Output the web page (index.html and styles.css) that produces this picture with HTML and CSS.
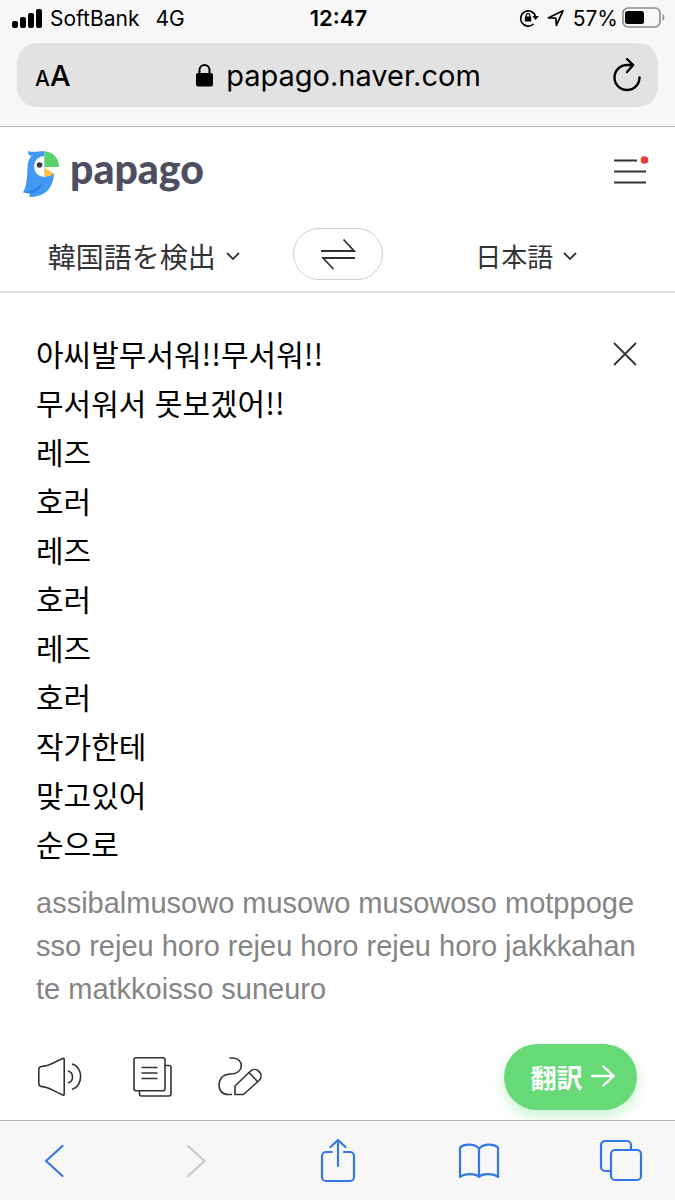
FILE: index.html
```html
<!DOCTYPE html>
<html lang="ja">
    <head>
        <meta charset="UTF-8" />
        <meta name="viewport" content="width=device-width, initial-scale=1.0" />
        <title>Papago</title>
        <link rel="stylesheet" href="styles.css">
    </head>
    <body>
        <div class="browser-top">
            <div class="status">
                <div class="status-left">
                    <svg width="30" height="20" viewBox="0 0 30 20"><rect x="0" y="13" width="6" height="7" rx="2" /><rect x="8" y="9" width="6" height="11" rx="2" /><rect x="16" y="5" width="6" height="15" rx="2" /><rect x="24" y="1" width="6" height="19" rx="2" /></svg>
                    <span>SoftBank</span>
                    <span class="network">4G</span>
                </div>
                <time>12:47</time>
                <div class="status-right">
                    <svg width="20" height="20" viewBox="0 0 20 20"><path d="M14.500 16A7.600 7.600 0 1 1 16.600 8.500" fill="none" stroke="#000" stroke-width="1.7" /><path d="M13.400 8h6.400l-3.200 4z" /><rect x="5.800" y="8.600" width="6.400" height="5" rx=".6" /><path d="M7.200 9V7.400a1.800 1.800 0 0 1 3.600 0V9" fill="none" stroke="#000" stroke-width="1.2" /></svg>
                    <svg width="18" height="18" viewBox="0 0 18 18"><path d="M1.500 8.800 16 1.800 9.400 16.400 8.800 9.200z" fill="none" stroke="#000" stroke-width="1.7" stroke-linejoin="round" /></svg>
                    <span>57%</span>
                    <svg class="battery" width="43" height="22" viewBox="0 0 43 22"><rect x="1" y="1" width="37" height="19" rx="5" fill="none" stroke="#8c8c8c" stroke-width="1.6" /><rect x="3" y="4" width="19" height="13" rx="2.5" /><path d="M40.500 7v7c2.600-1 2.600-6 0-7z" fill="#999" /></svg>
                </div>
            </div>
            <div class="address">
                <button class="text-size" aria-label="Text size"><small>A</small>A</button>
                <button class="url">
                    <svg width="18" height="24" viewBox="0 0 18 24"><rect x="0" y="10" width="17" height="13.500" rx="2" /><path d="M3.500 11V7a5 5 0 0 1 10 0v4" fill="none" stroke="#000" stroke-width="2" /></svg>
                    papago.naver.com
                </button>
                <button class="reload" aria-label="Reload">
                    <svg width="30" height="34" viewBox="0 0 30 34"><path d="M27.500 19.500A12.500 12.500 0 1 1 15 7h6M15 1l6.200 6-6.200 7" fill="none" stroke="#000" stroke-width="2.400" stroke-linecap="round" stroke-linejoin="round" /></svg>
                </button>
            </div>
        </div>

        <header>
            <a class="logo" href="#">
                <svg width="38" height="48" viewBox="0 0 38 48">
                    <path d="M5 1c3 1 7 1 10 .6L21.500 1v14L31 22c0 15-8 25-24.500 25l.5-4L0 42.500C4 35 4 29 4.500 17 4.700 12 6 9 8.500 6 6 5.500 5 4 5 1z" fill="#4298f5" />
                    <path d="M0 42.500C9 42 15 38 19 33c-1 6-6 10-12.500 10.500z" fill="#2f80e4" />
                    <path d="M21.500 6a10.500 10.500 0 0 0 0 21z" fill="#fff" />
                    <path d="M21.500 1.500C30 1.500 36 8 36 17H21.500z" fill="#5ad16b" />
                    <path d="M21.500 17H31v6l-9.500 4z" fill="#fff" />
                    <path d="M21.500 17.500 31 24q-5 3-9.500 3z" fill="#fdc23e" />
                    <circle cx="16.500" cy="15" r="2.800" fill="#383844" />
                </svg>
                <span>papago</span>
            </a>
            <button class="menu" aria-label="Menu">
                <svg width="36" height="30" viewBox="0 0 36 30"><path d="M1 6.500h23M1 17.500h32M1 28.500h32" stroke="#333" stroke-width="1.800" /><circle cx="31.500" cy="6" r="3.800" fill="#f23a34" /></svg>
            </button>
        </header>

        <nav class="languages">
            <label class="lang source">
                <select aria-label="翻訳元の言語">
                    <option>韓国語を検出</option>
                    <option>英語</option>
                </select>
                <svg width="24" height="24" viewBox="0 0 24 24"><path d="m6 9 6 6 6-6" /></svg>
            </label>
            <button class="swap" aria-label="言語を入れ替える">
                <svg width="36" height="32" viewBox="0 0 36 32"><path d="M1 13h33L23.500 1.500M35 20H3l10.500 11" /></svg>
            </button>
            <label class="lang target">
                <select aria-label="翻訳先の言語">
                    <option>日本語</option>
                    <option>英語</option>
                </select>
                <svg width="24" height="24" viewBox="0 0 24 24"><path d="m6 9 6 6 6-6" /></svg>
            </label>
        </nav>

        <main>
            <div class="input">
                <textarea lang="ko" rows="11" aria-label="翻訳するテキスト" spellcheck="false">아씨발무서워!!무서워!!
무서워서 못보겠어!!
레즈
호러
레즈
호러
레즈
호러
작가한테
맞고있어
순으로</textarea>
                <button class="clear" aria-label="消去">
                    <svg width="24" height="24" viewBox="0 0 24 24"><path d="m1 1 22 22M23 1 1 23" stroke="#333" stroke-width="1.800" /></svg>
                </button>
            </div>
            <p class="romanized">assibalmusowo musowo musowoso motppogesso rejeu horo rejeu horo rejeu horo jakkkahante matkkoisso suneuro</p>
            <div class="tools">
                <button aria-label="音声">
                    <svg width="44" height="40" viewBox="0 0 44 40"><path d="M.8 12.500c0-2 1-3 3-3 6 0 7-1.500 21-8 .8-.3 1.400 0 1.400.8v35c0 .8-.6 1.100-1.400.8-14-6.500-15-8.500-21-8.500-2 0-3-1-3-3zM30 14c6 1.500 6 10.500 0 12M34 7c11.500 3 11.500 22 0 25.500" /></svg>
                </button>
                <button aria-label="コピー">
                    <svg width="44" height="40" viewBox="-2 0 44 40"><rect x="4" y=".8" width="31" height="33" rx="2" /><path d="M11.500 10.500h16M11.500 16h16M11.500 21.500h16M35 8.500h4a2 2 0 0 1 2 2V37a2 2 0 0 1-2 2H11.500a2 2 0 0 1-2-2v-3" /></svg>
                </button>
                <button aria-label="手書き">
                    <svg width="44" height="40" viewBox="0 0 44 40"><path d="M11.500 1h3C26.500 1 26.500 17 13 17 3 17 1 24 1 28c0 5 3 9.500 9 9.500h4M17 37.500V29L32 14.500c6-6 15 2.500 9 9l-15.500 14zM31 15.500l8.500 9" /></svg>
                </button>
                <button class="translate">
                    翻訳
                    <svg width="24" height="22" viewBox="0 0 24 22"><path d="M1 11h21M12.500 1.500 22.500 11l-10 9.500" /></svg>
                </button>
            </div>
        </main>

        <footer class="toolbar">
            <button aria-label="Back"><svg width="44" height="44" viewBox="0 0 44 44"><path d="M30.500 7 14 22l16.500 15" stroke-width="3" /></svg></button>
            <button aria-label="Forward" disabled><svg width="44" height="44" viewBox="0 0 44 44"><path d="m14 7 16.500 15L14 37" stroke-width="3" /></svg></button>
            <button aria-label="Share"><svg width="44" height="44" viewBox="0 0 44 44"><path d="M16 13h-6a4 4 0 0 0-4 4v21a4 4 0 0 0 4 4h24a4 4 0 0 0 4-4V17a4 4 0 0 0-4-4h-6M22 27V1M14.500 8 22 1l7.500 7" /></svg></button>
            <button aria-label="Bookmarks"><svg width="44" height="44" viewBox="0 0 44 44"><path d="M22 10c-3-5-14-6-19-1.500V38c5-4 16-3.500 19 0 3-3.500 14-4 19 0V8.500C36 4 25 5 22 10zm0 0v28" /></svg></button>
            <button aria-label="Tabs"><svg width="44" height="44" viewBox="0 0 44 44"><rect x="12" y="11" width="30" height="30" rx="4" /><path d="M12 32H6a4 4 0 0 1-4-4V6a4 4 0 0 1 4-4h22a4 4 0 0 1 4 4v5" /></svg></button>
        </footer>
    </body>
</html>
```
FILE: styles.css
```css
* {
    box-sizing: border-box;
}

body {
    display: flex;
    flex-direction: column;
    min-height: 100vh;
    margin: 0;
    background: #fff;
    color: #000;
    font-family: Inter, "Noto Sans CJK JP", sans-serif;
}

button,
select,
textarea {
    margin: 0;
    padding: 0;
    border: 0;
    background: none;
    color: inherit;
    font: inherit;
}

button {
    cursor: pointer;
}

svg {
    display: block;
    flex: none;
}

/* Browser chrome */
.browser-top {
    padding-bottom: 19px;
    border-bottom: 1px solid #b2b2b2;
    background: #f7f7f7;
}

.status {
    display: grid;
    grid-template-columns: 1fr auto 1fr;
    align-items: center;
    height: 36px;
    padding: 0 10px 0 12px;
    font-size: 21px;
}

.status time {
    font-size: 22px;
    font-weight: 600;
}

.status-left,
.status-right {
    display: flex;
    align-items: center;
    gap: 8px;
}

.status-right {
    justify-content: flex-end;
}

.network {
    margin-left: 8px;
}

.battery {
    margin-left: -4px;
}

.address {
    display: grid;
    grid-template-columns: 1fr auto 1fr;
    align-items: center;
    height: 64px;
    margin: 7px 17px 0;
    padding: 0 16px 0 18px;
    border-radius: 20px;
    background: #e2e2e2;
    font-size: 29px;
}

.text-size {
    justify-self: start;
    font-weight: 500;
}

.text-size small {
    font-size: 21px;
}

.url {
    display: flex;
    align-items: center;
    gap: 12px;
}

.reload {
    justify-self: end;
}

/* Papago header */
header {
    display: flex;
    align-items: center;
    justify-content: space-between;
    height: 96px;
    padding: 0 26px 2px 23px;
}

.logo {
    display: flex;
    align-items: center;
    gap: 9px;
    color: #4f4e60;
    font-family: Lato, sans-serif;
    font-size: 41px;
    font-weight: 900;
    line-height: 48px;
    text-decoration: none;
}

.logo span {
    padding-bottom: 10px;
}

.menu {
    padding-bottom: 10px;
}

.languages {
    display: grid;
    grid-template-columns: 1fr 90px 1fr;
    align-items: center;
    padding: 5px 0 11px;
    border-bottom: 2px solid #e2e2e2;
    color: #333;
    font-family: "Noto Sans CJK JP", sans-serif;
}

.languages path {
    fill: none;
    stroke: #333;
    stroke-width: 1.8;
}

.lang {
    display: flex;
    align-items: center;
    justify-content: center;
    gap: 4px;
    padding-top: 4px;
}

.lang select {
    appearance: none;
    font-size: 28px;
    line-height: 40px;
}

.lang.target select {
    font-size: 26px;
}

.swap {
    display: flex;
    align-items: center;
    justify-content: center;
    height: 52px;
    border: 1px solid #d0d0d0;
    border-radius: 26px;
}

/* Source text */
main {
    flex: 1;
    padding: 36px 38px 10px 36px;
}

.input {
    display: flex;
    align-items: flex-start;
    justify-content: space-between;
}

.input textarea {
    flex: 1;
    height: 539px;
    overflow: hidden;
    outline: 0;
    resize: none;
    font-family: "Noto Sans CJK KR", sans-serif;
    font-size: 30px;
    line-height: 49px;
}

.clear {
    padding: 13px 0;
}

.romanized {
    margin: 14px 0 33px;
    color: #858585;
    font-family: "Liberation Sans", Arial, sans-serif;
    font-size: 29px;
    line-height: 43px;
    word-break: break-all;
}

.tools {
    display: flex;
    align-items: center;
    gap: 46px;
    padding-left: 2px;
}

.tools path,
.tools rect {
    fill: none;
    stroke: #333;
    stroke-width: 1.6;
}

.tools .translate {
    display: flex;
    align-items: center;
    justify-content: center;
    gap: 8px;
    width: 133px;
    height: 66px;
    margin-left: auto;
    padding: 0 0 2px 4px;
    border-radius: 33px;
    background: #67d977;
    box-shadow: 0 6px 14px #67d97759;
    color: #fff;
    font-family: "Noto Sans CJK JP", sans-serif;
    font-size: 26px;
    font-weight: 700;
}

.tools .translate path {
    stroke: #fff;
    stroke-width: 2.4;
    stroke-linecap: round;
}

/* Bottom bar */
.toolbar {
    position: relative;
    display: flex;
    align-items: center;
    justify-content: space-between;
    height: 80px;
    padding: 0 32px;
    border-top: 1px solid #b2b2b2;
    background: #f7f7f7;
}

.toolbar path,
.toolbar rect {
    fill: none;
    stroke: #3478e5;
    stroke-width: 2.2;
    stroke-linecap: round;
    stroke-linejoin: round;
}

.toolbar :disabled path {
    stroke: #c8c8c8;
}
```
